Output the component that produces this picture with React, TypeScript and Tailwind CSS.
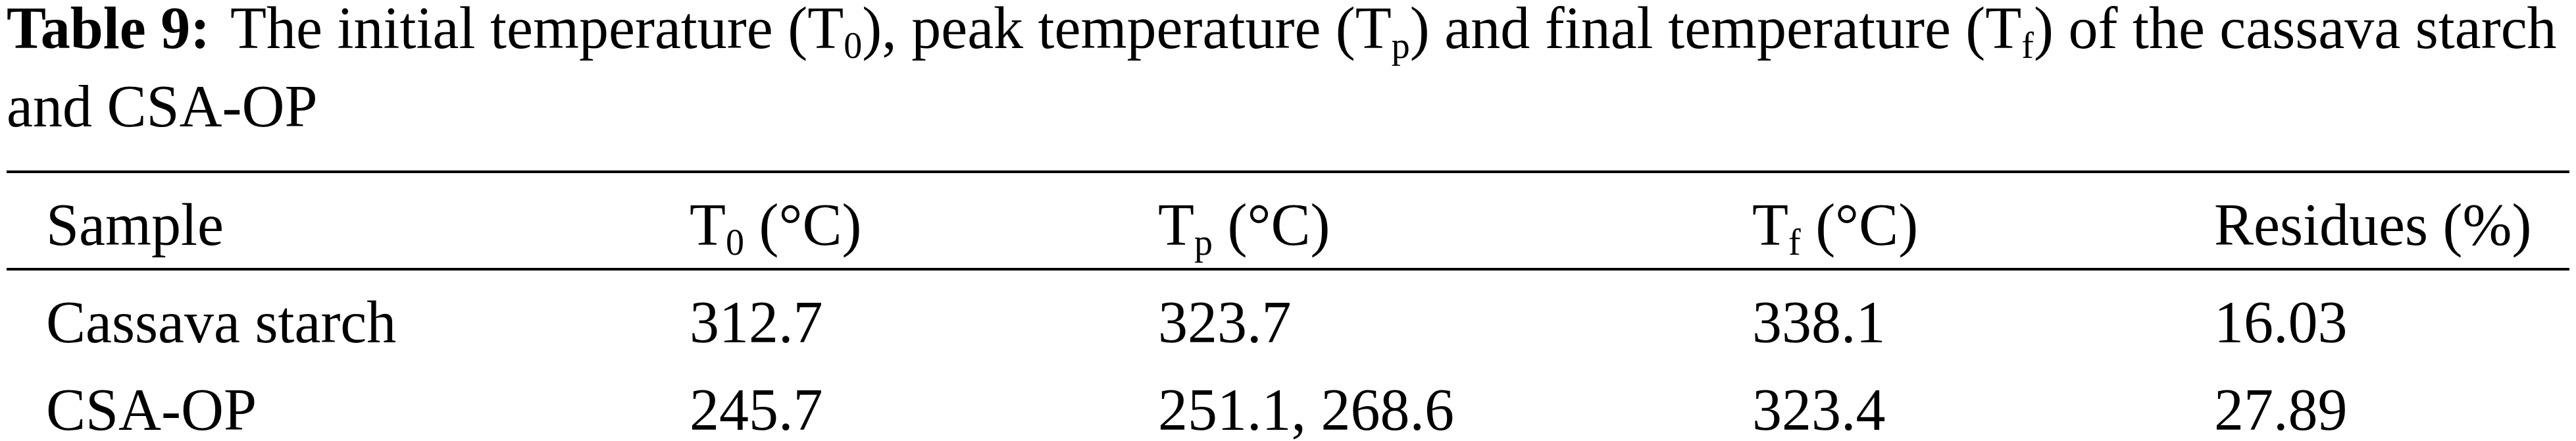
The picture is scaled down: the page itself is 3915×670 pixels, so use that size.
const serif = "font-['Liberation_Serif','Times_New_Roman',serif]";

const Sub = ({ children }: { children: React.ReactNode }) => (
  <span className="relative top-[15px] text-[56px]">{children}</span>
);

const rows = [
  { sample: "Cassava starch", t0: "312.7", tp: "323.7", tf: "338.1", residues: "16.03" },
  { sample: "CSA-OP", t0: "245.7", tp: "251.1, 268.6", tf: "323.4", residues: "27.89" },
];

const cols = "grid grid-cols-[978px_712px_903px_702px_1fr] pl-[60px]";

export default function App() {
  return (
    <div className={`${serif} h-[670px] w-[3915px] overflow-hidden bg-white text-black text-[90px]`}>
      <div className="ml-[10px] whitespace-nowrap">
        <div className="leading-[85px]">
          <span className="mr-[10px] font-bold">Table 9:</span> The initial temperature (T<Sub>0</Sub>), peak
          temperature (T<Sub>p</Sub>) and final temperature (T<Sub>f</Sub>) of the cassava starch
        </div>
        <div className="mt-[11px] leading-[107px]">and CSA-OP</div>
      </div>

      <div className="ml-[10px] mt-[44px] w-[3895px] border-y-[4px] border-black leading-[108px]">
        <div className={`${cols} border-b-[4px] border-black pt-[25px]`}>
          <div>Sample</div>
          <div>
            T<Sub>0</Sub> (°C)
          </div>
          <div>
            T<Sub>p</Sub> (°C)
          </div>
          <div>
            T<Sub>f</Sub> (°C)
          </div>
          <div>Residues (%)</div>
        </div>
        <div className="pb-[1px]">
          {rows.map((r) => (
            <div key={r.sample} className={`${cols} pt-[25px]`}>
              <div>{r.sample}</div>
              <div>{r.t0}</div>
              <div>{r.tp}</div>
              <div>{r.tf}</div>
              <div>{r.residues}</div>
            </div>
          ))}
        </div>
      </div>
    </div>
  );
}
